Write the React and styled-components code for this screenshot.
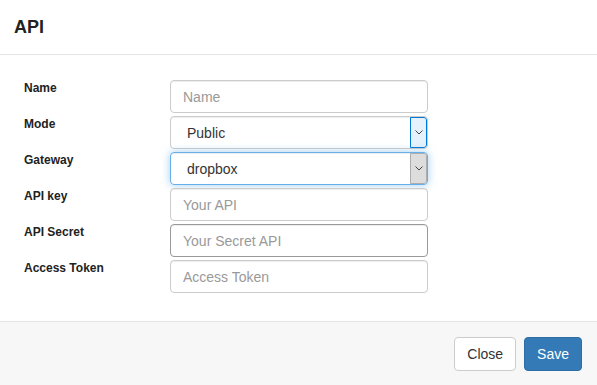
import styled, { createGlobalStyle } from 'styled-components';

const GlobalStyle = createGlobalStyle`
  html, body {
    margin: 0;
    padding: 0;
    background: #fff;
  }
  body {
    font-family: "Liberation Sans", Arial, Helvetica, sans-serif;
    font-size: 14px;
    color: #333;
  }
  * { box-sizing: border-box; }
`;

const Modal = styled.div`
  width: 597px;
  height: 385px;
  display: flex;
  flex-direction: column;
  background: #fff;
  overflow: hidden;
`;

const Header = styled.div`
  height: 55px;
  padding: 0 14px;
  display: flex;
  align-items: center;
  border-bottom: 1px solid #e5e5e5;
  h4 {
    margin: 0;
    font-size: 18px;
    font-weight: bold;
    color: #222;
  }
`;

const Body = styled.div`
  flex: 1;
  padding: 25px 24px 0;
`;

const Row = styled.div`
  display: grid;
  grid-template-columns: 146px 258px;
  margin-bottom: 3px;
`;

const Label = styled.label`
  font-size: 12px;
  font-weight: bold;
  color: #222;
  padding-top: 1px;
  line-height: 14px;
`;

const Input = styled.input`
  height: 33px;
  width: 100%;
  padding: 6px 12px;
  font-family: inherit;
  font-size: 14px;
  color: #555;
  border: 1px solid ${p => (p.$hover ? '#999' : '#ccc')};
  border-radius: 4px;
  outline: none;
  box-shadow: inset 0 1px 1px rgba(0, 0, 0, 0.075);
  &::placeholder {
    color: #999;
  }
`;

const Select = styled.div`
  height: 33px;
  display: flex;
  align-items: stretch;
  border: 1px solid ${p => (p.$focus ? '#66afe9' : '#ccc')};
  border-radius: 4px;
  box-shadow: ${p =>
    p.$focus
      ? 'inset 0 1px 1px rgba(0,0,0,.075), 0 0 8px rgba(102,175,233,.6)'
      : 'inset 0 1px 1px rgba(0,0,0,.075)'};
  overflow: hidden;
`;

const SelectValue = styled.span`
  flex: 1;
  display: flex;
  align-items: center;
  padding-left: 16px;
  font-size: 14px;
  color: #333;
`;

const ArrowBox = styled.span`
  width: 17px;
  display: flex;
  align-items: center;
  justify-content: center;
  background: ${p => (p.$active ? '#e5f1fb' : '#dddddd')};
  border: 1px solid ${p => (p.$active ? '#0078d7' : '#adadad')};
  border-radius: 0 3px 3px 0;
`;

const Footer = styled.div`
  height: 64px;
  border-top: 1px solid #e5e5e5;
  background: #f7f7f7;
  display: flex;
  justify-content: flex-end;
  align-items: flex-start;
  gap: 8px;
  padding: 15px 15px 0;
`;

const Button = styled.button`
  height: 34px;
  padding: 6px 12px;
  font-family: inherit;
  font-size: 14px;
  border-radius: 4px;
  border: 1px solid ${p => (p.$primary ? '#2e6da4' : '#ccc')};
  background: ${p => (p.$primary ? '#337ab7' : '#fff')};
  color: ${p => (p.$primary ? '#fff' : '#333')};
  cursor: pointer;
`;

function Chevron() {
  return (
    <svg width="8" height="5" viewBox="0 0 8 5">
      <path d="M0.5 0.5 L4 4 L7.5 0.5" fill="none" stroke="#444" strokeWidth="1" />
    </svg>
  );
}

export default function App() {
  return (
    <>
      <GlobalStyle />
      <Modal>
        <Header>
          <h4>API</h4>
        </Header>
        <Body>
          <Row>
            <Label>Name</Label>
            <Input placeholder="Name" />
          </Row>
          <Row>
            <Label>Mode</Label>
            <Select>
              <SelectValue>Public</SelectValue>
              <ArrowBox $active><Chevron /></ArrowBox>
            </Select>
          </Row>
          <Row>
            <Label>Gateway</Label>
            <Select $focus>
              <SelectValue>dropbox</SelectValue>
              <ArrowBox><Chevron /></ArrowBox>
            </Select>
          </Row>
          <Row>
            <Label>API key</Label>
            <Input placeholder="Your API" />
          </Row>
          <Row>
            <Label>API Secret</Label>
            <Input placeholder="Your Secret API" $hover />
          </Row>
          <Row>
            <Label>Access Token</Label>
            <Input placeholder="Access Token" />
          </Row>
        </Body>
        <Footer>
          <Button>Close</Button>
          <Button $primary>Save</Button>
        </Footer>
      </Modal>
    </>
  );
}
